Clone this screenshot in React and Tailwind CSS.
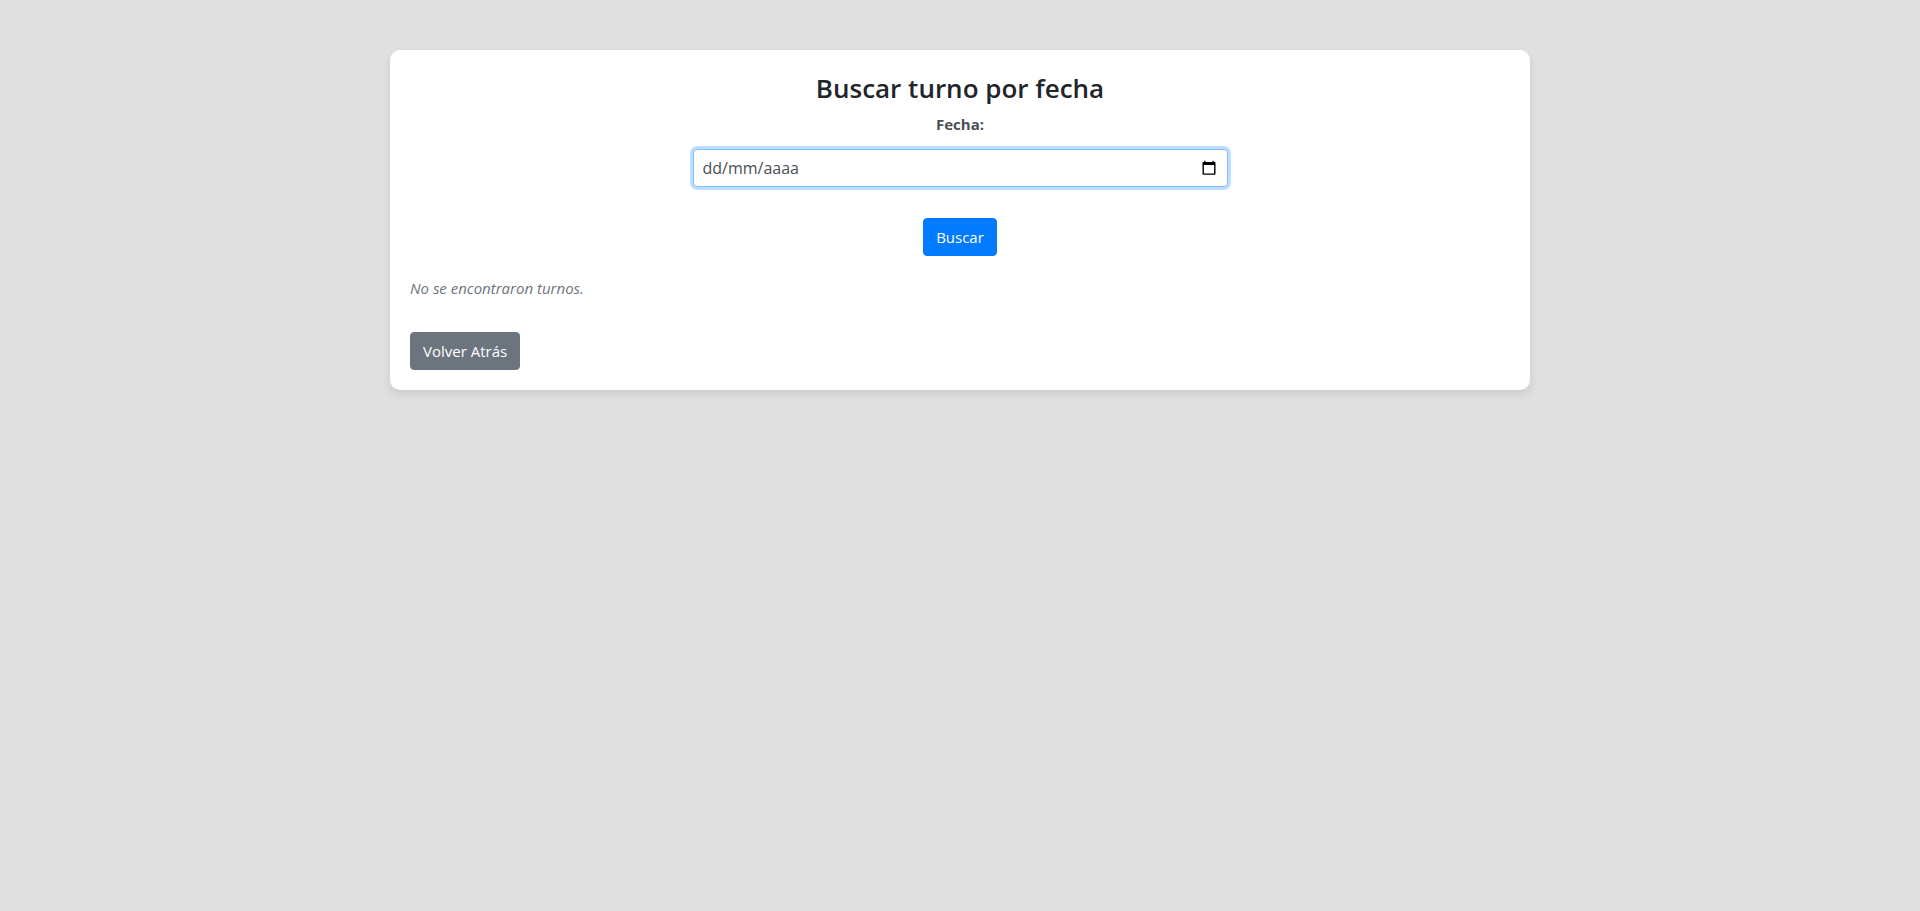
import { useState } from "react";

function CalendarIcon() {
  return (
    <svg width="14" height="16" viewBox="0 0 14 16" aria-hidden="true">
      <path
        fill="#000"
        fillRule="evenodd"
        d="M2.2 .8h1.300v1.200h7V.8h1.300v1.200h.7c.6 0 1 .4 1 1v10.700c0 .6-.4 1-1 1h-11c-.6 0-1-.4-1-1V3c0-.6.4-1 1-1h.7zM1.900 5v8.400h10.200V5z"
      />
    </svg>
  );
}

export default function App() {
  const [date, setDate] = useState("");

  return (
    <div className="min-h-screen bg-[#e0e0e0] pt-[50px] font-['Segoe_UI','Open_Sans',sans-serif] text-[15px] leading-6 text-[#212529]">
      <main className="mx-auto w-full max-w-[1140px] rounded-[10px] bg-white p-5 shadow-[0_4px_8px_rgba(0,0,0,0.1)]">
        <form
          className="flex flex-col items-center"
          onSubmit={(event) => event.preventDefault()}
        >
          <h2 className="mb-[6px] text-[26px] leading-9 font-semibold">
            Buscar turno por fecha
          </h2>
          <label htmlFor="fecha" className="mb-[13px] font-bold text-[#495057]">
            Fecha:
          </label>
          <div className="flex h-[38px] w-full max-w-[535px] items-center rounded border border-[#80bdff] bg-white pr-[11px] pl-[9px] shadow-[0_0_0_3px_rgba(0,123,255,0.25)]">
            <input
              id="fecha"
              type="text"
              placeholder="dd/mm/aaaa"
              value={date}
              onChange={(event) => setDate(event.target.value)}
              className="min-w-0 flex-1 bg-transparent text-base text-[#495057] outline-none placeholder:text-[#495057]"
            />
            <button type="button" aria-label="Abrir calendario">
              <CalendarIcon />
            </button>
          </div>
          <button
            type="submit"
            className="mt-[31px] h-[38px] rounded border border-[#007bff] bg-[#007bff] px-3 text-white"
          >
            Buscar
          </button>
        </form>
        <p className="mt-5 text-[#6c757d] italic">No se encontraron turnos.</p>
        <button
          type="button"
          className="mt-8 block h-[38px] rounded border border-[#6c757d] bg-[#6c757d] px-3 text-white"
        >
          Volver Atrás
        </button>
      </main>
    </div>
  );
}
